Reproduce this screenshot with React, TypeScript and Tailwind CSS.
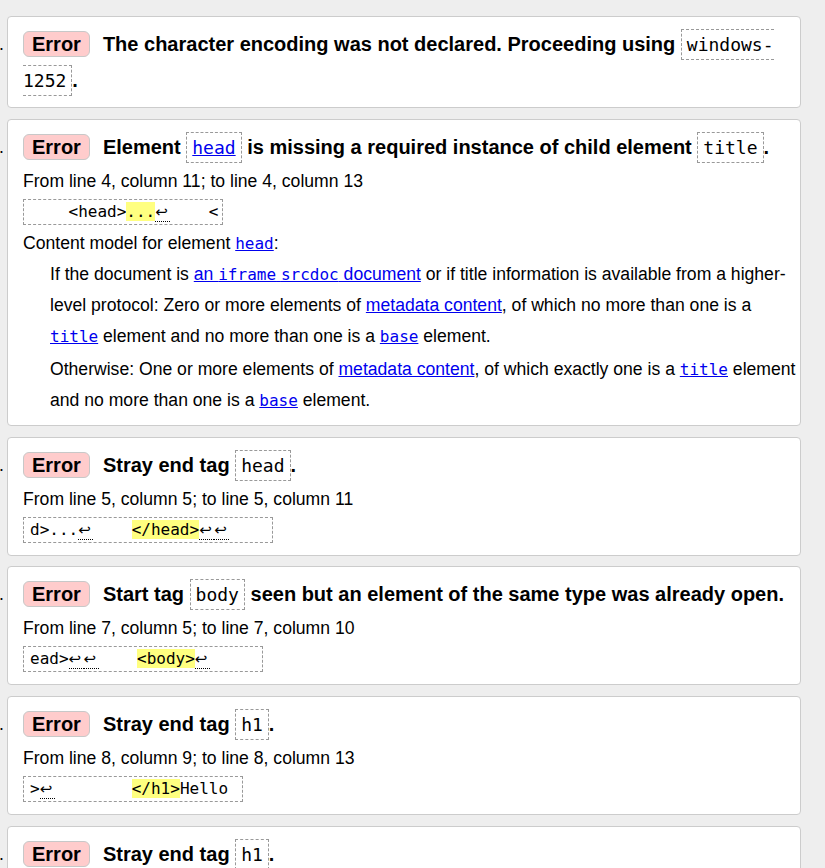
import React from "react";

const SANS = "font-['Liberation_Sans',Arial,sans-serif]";
const MONO = "font-['DejaVu_Sans_Mono','Liberation_Mono',monospace]";

function Badge() {
  return (
    <span className="inline-block mr-[13px] px-[8px] h-[26px] leading-[24px] rounded-[6px] border border-[#c8c8c8] bg-[#ffcccc] text-[20px] font-bold">
      Error
    </span>
  );
}

function TCode({ children }: { children: React.ReactNode }) {
  return (
    <code
      className={`${MONO} text-[18px] font-normal leading-none border border-dashed border-[#999999] px-[5px] py-[4px]`}
    >
      {children}
    </code>
  );
}

function MLink({ children }: { children: React.ReactNode }) {
  return (
    <a href="#" className={`${MONO} text-[16px] leading-none text-[#0000ee] underline`}>
      {children}
    </a>
  );
}

function Link({ children }: { children: React.ReactNode }) {
  return (
    <a href="#" className="text-[#0000ee] underline">
      {children}
    </a>
  );
}

function Ret() {
  return (
    <span className="inline-block w-[15px] leading-[18px] border-b border-dotted border-black font-['DejaVu_Sans',sans-serif] text-[15px]">
      ↩
    </span>
  );
}

function Hl({ children }: { children: React.ReactNode }) {
  return <span className="bg-[#ffff80]">{children}</span>;
}

function Src({ children }: { children: React.ReactNode }) {
  return (
    <div className="h-[31px] pt-[2px] flex items-start">
      <div
        className={`${MONO} h-[26px] border border-dashed border-[#999999] pl-[6px] pr-[4px] text-[16px] leading-[24px] whitespace-pre`}
      >
        {children}
      </div>
    </div>
  );
}

function Title({ children }: { children: React.ReactNode }) {
  return (
    <div className="text-[20px] font-bold leading-[36px]">
      <Badge />
      {children}
    </div>
  );
}

function Line({ children, lh = "leading-[32px]" }: { children: React.ReactNode; lh?: string }) {
  return <div className={`text-[17.6px] ${lh}`}>{children}</div>;
}

function Row({ n, children }: { n: number; children: React.ReactNode }) {
  return (
    <div className="flex shrink-0">
      <div className="w-[7px] shrink-0 overflow-hidden flex justify-end pr-[3px] pt-[10px] text-[17.6px] leading-[36px] text-black">
        <span className="whitespace-nowrap">{n}.</span>
      </div>
      <div className="w-[794px] shrink-0 bg-white border border-[#cccccc] rounded-[4px] pl-[15px] pr-[4px] pt-[9px] pb-[9px]">
        {children}
      </div>
    </div>
  );
}

export default function App() {
  return (
    <div className={`${SANS} bg-[#eeeeee] h-[868px] overflow-hidden pt-[16px] flex flex-col gap-[10.8px] text-black`}>
      <Row n={1}>
        <Title>
          The character encoding was not declared. Proceeding using{" "}
          <TCode>
            windows-<wbr />1252
          </TCode>
          .
        </Title>
      </Row>

      <Row n={2}>
        <Title>
          Element{" "}
          <TCode>
            <a href="#" className="text-[#0000ee] underline">head</a>
          </TCode>{" "}
          is missing a required instance of child element <TCode>title</TCode>.
        </Title>
        <Line>From line 4, column 11; to line 4, column 13</Line>
        <Src>
          {"    <head>"}
          <Hl>...</Hl>
          <Ret />
          {"    <"}
        </Src>
        <Line lh="leading-[31px]">
          Content model for element <MLink>head</MLink>:
        </Line>
        <p className="ml-[27px] text-[17.6px] leading-[31px]">
          If the document is{" "}
          <a href="#" className="text-[#0000ee] underline">
            an <span className={`${MONO} text-[16px] leading-none`}>iframe</span>{" "}
            <span className={`${MONO} text-[16px] leading-none`}>srcdoc</span> document
          </a>{" "}
          or if title information is available from a higher-level protocol: Zero or more elements of{" "}
          <Link>metadata content</Link>, of which no more than one is a <MLink>title</MLink> element and no
          more than one is a <MLink>base</MLink> element.
        </p>
        <p className="ml-[27px] mt-[2px] text-[17.6px] leading-[31px]">
          Otherwise: One or more elements of <Link>metadata content</Link>, of which exactly one is a{" "}
          <MLink>title</MLink> element and no more than one is a <MLink>base</MLink> element.
        </p>
      </Row>

      <Row n={3}>
        <Title>
          Stray end tag <TCode>head</TCode>.
        </Title>
        <Line>From line 5, column 5; to line 5, column 11</Line>
        <Src>
          {"d>..."}
          <Ret />
          {"    "}
          <Hl>{"</head>"}</Hl>
          <Ret />
          <Ret />
          {"    "}
        </Src>
      </Row>

      <Row n={4}>
        <Title>
          Start tag <TCode>body</TCode> seen but an element of the same type was already open.
        </Title>
        <Line>From line 7, column 5; to line 7, column 10</Line>
        <Src>
          {"ead>"}
          <Ret />
          <Ret />
          {"    "}
          <Hl>{"<body>"}</Hl>
          <Ret />
          {"     "}
        </Src>
      </Row>

      <Row n={5}>
        <Title>
          Stray end tag <TCode>h1</TCode>.
        </Title>
        <Line>From line 8, column 9; to line 8, column 13</Line>
        <Src>
          {">"}
          <Ret />
          {"        "}
          <Hl>{"</h1>"}</Hl>
          {"Hello "}
        </Src>
      </Row>

      <Row n={6}>
        <Title>
          Stray end tag <TCode>h1</TCode>.
        </Title>
        <Line>From line 9, column 9; to line 9, column 13</Line>
        <Src>
          {">"}
          <Ret />
          {"        "}
          <Hl>{"</h1>"}</Hl>
          {"World "}
        </Src>
      </Row>
    </div>
  );
}
